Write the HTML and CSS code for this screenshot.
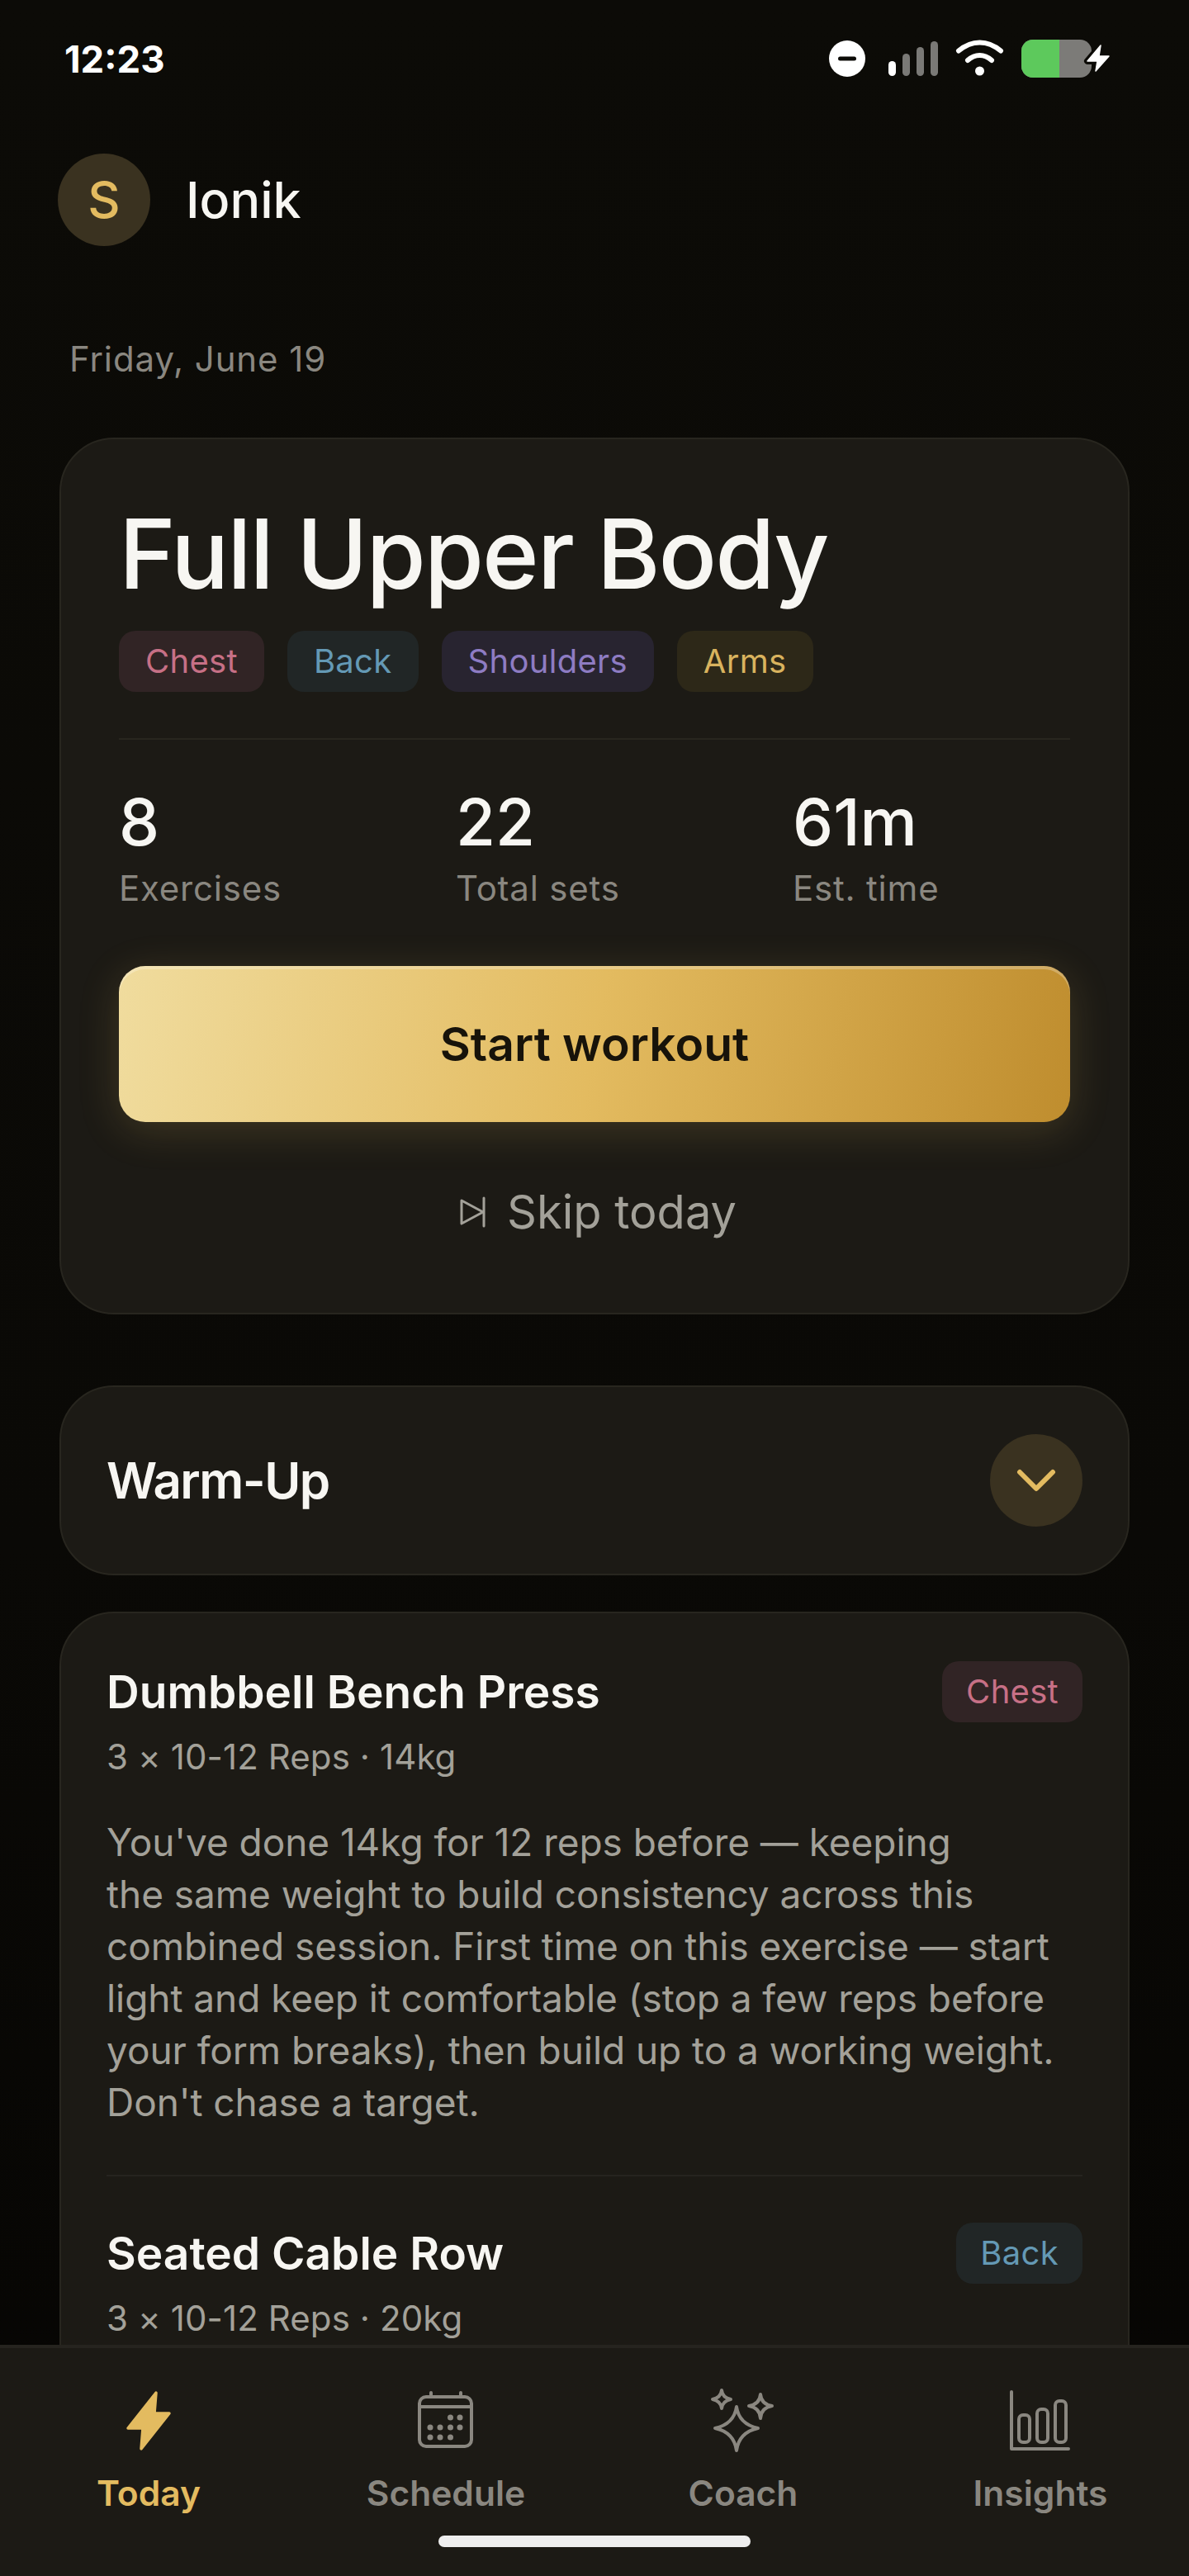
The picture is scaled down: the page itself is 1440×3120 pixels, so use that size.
FILE: index.html
```html
<!DOCTYPE html>
<html lang="en">
<head>
    <meta charset="UTF-8">
    <meta name="viewport" content="width=device-width, initial-scale=1.0">
    <title>Today</title>
    <link rel="stylesheet" href="styles.css">
</head>
<body>
    <div class="screen">
        <div class="status-bar">
            <span class="clock">12:23</span>
            <svg class="status-icons" width="345" height="55" viewBox="1000 45 345 55">
                <circle cx="1024" cy="72" r="22" fill="#fff"/>
                <rect x="1013" y="69.5" width="22" height="5" rx="2.5" fill="#0c0b07"/>
                <rect x="1074" y="75" width="9" height="18" rx="4.5" fill="#fff"/>
                <rect x="1091" y="66" width="9" height="27" rx="4.5" fill="#7a7976"/>
                <rect x="1108" y="58" width="9" height="35" rx="4.5" fill="#7a7976"/>
                <rect x="1125" y="51" width="9" height="42" rx="4.5" fill="#7a7976"/>
                <path d="M1159 62.5C1175 49 1194 49 1210 62.5" fill="none" stroke="#fff" stroke-width="6" stroke-linecap="round"/>
                <path d="M1170 74C1179 66 1190 66 1199 74" fill="none" stroke="#fff" stroke-width="6" stroke-linecap="round"/>
                <circle cx="1184.500" cy="87" r="5.500" fill="#fff"/>
                <rect x="1235" y="49" width="85" height="46" rx="14" fill="#7c7b78"/>
                <path d="M1281 49H1249A14 14 0 0 0 1235 63V81A14 14 0 0 0 1249 95H1281Z" fill="#5dc95c"/>
                <path d="M1331 56L1315 75H1327L1325 87L1341 69H1329Z" fill="#fff" stroke="#0c0b07" stroke-width="8" stroke-linejoin="round" paint-order="stroke"/>
                <path d="M1331 56L1315 75H1327L1325 87L1341 69H1329Z" fill="#fff" stroke="#fff" stroke-width="1.500" stroke-linejoin="round"/>
            </svg>
        </div>

        <header class="top-row">
            <div class="avatar">S</div>
            <div class="user-name">Ionik</div>
        </header>

        <div class="today-date">Friday, June 19</div>

        <section class="card plan-card">
            <h1 class="plan-title">Full Upper Body</h1>
            <div class="chips">
                <span class="chip chest">Chest</span>
                <span class="chip back">Back</span>
                <span class="chip shoulders">Shoulders</span>
                <span class="chip arms">Arms</span>
            </div>
            <div class="stats">
                <div class="stat">
                    <div class="stat-num">8</div>
                    <div class="stat-label">Exercises</div>
                </div>
                <div class="stat">
                    <div class="stat-num">22</div>
                    <div class="stat-label">Total sets</div>
                </div>
                <div class="stat">
                    <div class="stat-num">61m</div>
                    <div class="stat-label">Est. time</div>
                </div>
            </div>
            <a href="#" class="start-button">Start workout</a>
            <a href="#" class="skip-link">
                <svg width="32" height="38" viewBox="0 0 32 38" fill="none" stroke="#a3a199" stroke-width="3" stroke-linejoin="round" stroke-linecap="round">
                    <path d="M3 5L29 19L3 33Z"/>
                    <path d="M30 2V36"/>
                </svg>
                Skip today
            </a>
        </section>

        <section class="card warmup-card">
            <h2 class="warmup-title">Warm-Up</h2>
            <div class="chevron-circle">
                <svg width="48" height="28" viewBox="0 0 48 28" fill="none" stroke="#e3bb60" stroke-width="6" stroke-linecap="round" stroke-linejoin="round">
                    <path d="M4 4L24 24L44 4"/>
                </svg>
            </div>
        </section>

        <section class="card exercise-card">
            <div class="exercise">
                <div class="exercise-head">
                    <h3 class="exercise-name">Dumbbell Bench Press</h3>
                    <span class="chip chest">Chest</span>
                </div>
                <div class="exercise-meta">3 × 10-12 Reps · 14kg</div>
                <p class="exercise-note">You've done 14kg for 12 reps before — keeping<br>the same weight to build consistency across this<br>combined session. First time on this exercise — start<br>light and keep it comfortable (stop a few reps before<br>your form breaks), then build up to a working weight.<br>Don't chase a target.</p>
            </div>
            <div class="exercise">
                <div class="exercise-head">
                    <h3 class="exercise-name">Seated Cable Row</h3>
                    <span class="chip back">Back</span>
                </div>
                <div class="exercise-meta">3 × 10-12 Reps · 20kg</div>
            </div>
        </section>

        <nav class="tab-bar">
            <a href="#" class="tab active">
                <svg width="80" height="80" viewBox="0 0 80 80" fill="#e3bb60" stroke="#e3bb60" stroke-width="3.500" stroke-linejoin="round">
                    <path d="M49 6L47 31H65L31 74L33 49H15Z"/>
                </svg>
                Today
            </a>
            <a href="#" class="tab">
                <svg width="80" height="80" viewBox="0 0 80 80" fill="none" stroke="#8a8780" stroke-width="4">
                    <rect x="8" y="11" width="63" height="60" rx="8"/>
                    <path d="M8 23H71"/>
                    <path d="M22 6V11M58 6V11" stroke-linecap="round"/>
                    <g fill="#8a8780" stroke="none">
                        <circle cx="45.500" cy="36" r="3.500"/><circle cx="57" cy="36" r="3.500"/>
                        <circle cx="21" cy="48" r="3.500"/><circle cx="33" cy="48" r="3.500"/><circle cx="45.500" cy="48" r="3.500"/><circle cx="57" cy="48" r="3.500"/>
                        <circle cx="21" cy="60" r="3.500"/><circle cx="33" cy="60" r="3.500"/><circle cx="45.500" cy="60" r="3.500"/>
                    </g>
                </svg>
                Schedule
            </a>
            <a href="#" class="tab">
                <svg width="80" height="80" viewBox="0 0 80 80" fill="none" stroke="#8a8780" stroke-width="4" stroke-linejoin="round">
                    <path d="M32 23Q35 44 58 49Q35 54 32 76Q29 54 6 49Q29 44 32 23Z"/>
                    <path d="M14 3Q15 12 25 14Q15 16 14 25Q13 16 3 14Q13 12 14 3Z"/>
                    <path d="M61 8Q62 20 75 22Q62 24 61 37Q60 24 47 22Q60 20 61 8Z"/>
                </svg>
                Coach
            </a>
            <a href="#" class="tab">
                <svg width="80" height="80" viewBox="0 0 80 80" fill="none" stroke="#8a8780" stroke-width="4" stroke-linecap="round" stroke-linejoin="round">
                    <path d="M5 5V74H74"/>
                    <rect x="14" y="33" width="13" height="33" rx="5"/>
                    <rect x="36" y="26" width="13" height="40" rx="5"/>
                    <rect x="58" y="16" width="13" height="50" rx="5"/>
                </svg>
                Insights
            </a>
            <div class="home-indicator"></div>
        </nav>
    </div>
</body>
</html>
```
FILE: styles.css
```css
* {
    box-sizing: border-box;
}
body, html {
    margin: 0;
    padding: 0;
    height: 100%;
    overflow: hidden;
}
body {
    background: #0c0b07;
    font-family: Inter, "Liberation Sans", sans-serif;
    color: #f7f6f2;
}
h1, h2, h3, p {
    margin: 0;
    font-weight: normal;
}
.screen {
    position: relative;
    width: 1440px;
    height: 3120px;
    overflow: hidden;
    padding: 0 72px;
    background: linear-gradient(#0c0b07, #0a0906 60%, #060503);
}

/* status bar */
.status-bar {
    display: flex;
    justify-content: space-between;
    align-items: center;
    height: 140px;
    padding-top: 3px;
    margin-left: 6px;
    margin-right: 21px;
}
.clock {
    font-size: 45.5px;
    font-weight: 700;
    color: #fff;
}
.status-icons {
    display: block;
}

/* header */
.top-row {
    display: flex;
    align-items: center;
    gap: 43px;
    height: 112px;
    margin-top: 46px;
    margin-left: -2px;
}
.avatar {
    width: 112px;
    height: 112px;
    border-radius: 50%;
    background: #3a3220;
    color: #e3bb60;
    font-size: 61px;
    font-weight: 500;
    display: flex;
    align-items: center;
    justify-content: center;
}
.user-name {
    font-size: 61px;
    font-weight: 500;
}
.today-date {
    margin-top: 112px;
    margin-left: 12px;
    font-size: 42px;
    line-height: 50px;
    color: #8a8780;
    letter-spacing: 0.9px;
}

/* cards */
.card {
    background: #1c1a15;
    border: 2px solid #28261f;
    border-radius: 66px;
}
.plan-card {
    margin-top: 70px;
    height: 1062px;
    padding: 70px 70px 0;
}
.plan-title {
    font-size: 117px;
    line-height: 138px;
    font-weight: 500;
    letter-spacing: -2.1px;
    margin-left: 0;
}
.chips {
    display: flex;
    gap: 28px;
    margin-top: 24px;
    padding-bottom: 56px;
    border-bottom: 2px solid #28261f;
}
.chip {
    display: inline-block;
    height: 74px;
    line-height: 74px;
    padding: 0 32px;
    border-radius: 20px;
    font-size: 40px;
    letter-spacing: 0.3px;
}
.chest {
    background: #312425;
    color: #c77086;
}
.back {
    background: #212626;
    color: #6499b5;
}
.shoulders {
    background: #282430;
    color: #8e7cc3;
}
.arms {
    background: #2d2818;
    color: #d9b35e;
}
.stats {
    display: grid;
    grid-template-columns: repeat(3, 1fr);
    column-gap: 72px;
    margin-top: 50px;
}
.stat-num {
    font-size: 78px;
    line-height: 100px;
    font-weight: 500;
}
.stat-label {
    font-size: 42px;
    line-height: 60px;
    color: #8a8780;
    letter-spacing: 0.8px;
}
.start-button {
    display: block;
    height: 189px;
    line-height: 189px;
    margin-top: 64px;
    border-radius: 32px;
    text-align: center;
    font-size: 57px;
    font-weight: 600;
    color: #17130a;
    text-decoration: none;
    background: linear-gradient(100deg, #f0dc9e 0%, #e3bb60 50%, #bf8d2e 100%);
    box-shadow: inset 0 4px 0 rgba(255,255,255,0.25), 0 10px 50px rgba(227,187,96,0.18);
}
.skip-link {
    display: flex;
    align-items: center;
    justify-content: center;
    gap: 26px;
    margin-top: 74px;
    margin-left: 8px;
    font-size: 56px;
    line-height: 70px;
    color: #a3a199;
    text-decoration: none;
}
.warmup-card {
    display: flex;
    align-items: center;
    justify-content: space-between;
    height: 230px;
    margin-top: 86px;
    padding: 0 55px 0 55px;
}
.warmup-title {
    font-size: 60px;
    font-weight: 600;
    letter-spacing: -1.5px;
}
.chevron-circle {
    width: 112px;
    height: 112px;
    border-radius: 50%;
    background: #3a3220;
    display: flex;
    align-items: center;
    justify-content: center;
}

/* exercises */
.exercise-card {
    margin-top: 44px;
    padding: 58px 55px 120px 55px;
}
.exercise-card .chip {
    padding: 0 29px;
}
.exercise + .exercise {
    border-top: 2px solid #26241f;
    margin-top: 56px;
    padding-top: 56px;
}
.exercise-head {
    display: flex;
    justify-content: space-between;
    align-items: center;
}
.exercise-name {
    font-size: 55px;
    font-weight: 600;
}
.exercise-meta {
    margin-top: 12px;
    font-size: 42px;
    line-height: 60px;
    letter-spacing: 0.1px;
    color: #a3a199;
}
.exercise-note {
    margin-top: 42px;
    font-size: 46px;
    line-height: 63px;
    letter-spacing: -0.06px;
    color: #a3a199;
}

/* bottom tabs */
.tab-bar {
    position: absolute;
    left: 0;
    bottom: 0;
    width: 1440px;
    height: 280px;
    display: flex;
    background: #1c1a15;
    border-top: 4px solid #26241f;
}
.tab {
    flex: 1;
    display: flex;
    flex-direction: column;
    align-items: center;
    padding-top: 48px;
    gap: 18px;
    font-size: 42.5px;
    font-weight: 600;
    line-height: 60px;
    color: #8a8780;
    text-decoration: none;
}
.tab svg {
    display: block;
}
.tab.active {
    color: #e3bb60;
}
.home-indicator {
    position: absolute;
    left: 531px;
    top: 227px;
    width: 378px;
    height: 14px;
    border-radius: 7px;
    background: #eee;
}
```
